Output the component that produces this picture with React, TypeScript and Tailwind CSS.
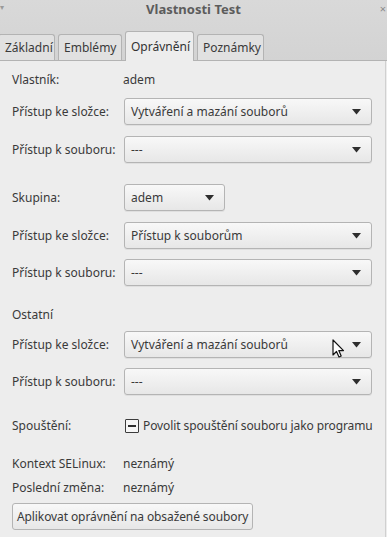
import React from "react";

const font = { fontFamily: '"Noto Sans", "Open Sans", sans-serif' };

function Arrow() {
  return (
    <svg width="9" height="6" viewBox="0 0 9 6" className="shrink-0">
      <path d="M0 0 H9 L4.5 5.5 Z" fill="#2e2e2e" />
    </svg>
  );
}

function Combo({ text, w = "w-[248px]" }: { text: string; w?: string }) {
  return (
    <div
      className={`${w} h-[27px] flex items-center justify-between pl-[6px] pr-[10px] rounded-[3px] border border-[#b4b4b4] bg-gradient-to-b from-[#f8f8f8] to-[#e7e7e7] shadow-[0_1px_0_rgba(0,0,0,0.06)]`}
    >
      <span className="text-[#3a3a3a] whitespace-nowrap">{text}</span>
      <Arrow />
    </div>
  );
}

function Row({ label, children, className = "" }: { label: string; children: React.ReactNode; className?: string }) {
  return (
    <div className={`flex items-center ${className}`}>
      <div className="w-[112px] shrink-0 text-[#3a3a3a] whitespace-nowrap">{label}</div>
      {children}
    </div>
  );
}

function Tab({ label, active = false, className = "" }: { label: string; active?: boolean; className?: string }) {
  return active ? (
    <div className={`h-[30px] px-[5px] flex items-center whitespace-nowrap rounded-t-[3px] border border-b-0 border-[#b3b3b3] bg-[#ededed] text-[#333] -mb-px relative z-10 ${className}`}>
      {label}
    </div>
  ) : (
    <div className={`h-[26px] px-[5px] flex items-center whitespace-nowrap rounded-t-[3px] border border-b-0 border-[#b3b3b3] bg-[#e1e1e1] text-[#3a3a3a] ${className}`}>
      {label}
    </div>
  );
}

export default function App() {
  return (
    <div className="w-[387px] h-[537px] overflow-hidden bg-[#ededed] text-[12px] leading-[18px] relative" style={font}>
      {/* header */}
      <div className="h-[61px] bg-gradient-to-b from-[#d9d9d9] to-[#d3d3d3] border-b border-[#b3b3b3] flex flex-col relative">
        <div className="h-[17px] flex items-center justify-center relative">
          <span className="font-bold text-[13px] text-[#5c5c5c] whitespace-nowrap">Vlastnosti Test</span>
          <span className="absolute left-[0px] top-[3px] text-[8px] text-[#9a9a9a] leading-none">▾</span>
          <span className="absolute right-[1px] top-[3px] text-[11px] text-[#8a8a8a] leading-none">×</span>
        </div>
        <div className="mt-auto flex items-end gap-[3px] -ml-[2px]">
          <Tab label="Základní" className="w-[57px] pl-[6px]" />
          <Tab label="Emblémy" className="w-[64px]" />
          <Tab label="Oprávnění" active className="w-[69px]" />
          <Tab label="Poznámky" className="w-[67px]" />
        </div>
      </div>

      {/* content */}
      <div className="pl-[12px] pt-[10px] flex flex-col">
        <Row label="Vlastník:" className="h-[18px]">
          <span className="text-[#3a3a3a] -ml-px">adem</span>
        </Row>
        <Row label="Přístup ke složce:" className="mt-[9px]">
          <Combo text="Vytváření a mazání souborů" />
        </Row>
        <Row label="Přístup k souboru:" className="mt-[11px]">
          <Combo text="---" />
        </Row>

        <Row label="Skupina:" className="mt-[21px]">
          <Combo text="adem" w="w-[101px]" />
        </Row>
        <Row label="Přístup ke složce:" className="mt-[11px]">
          <Combo text="Přístup k souborům" />
        </Row>
        <Row label="Přístup k souboru:" className="mt-[10px]">
          <Combo text="---" />
        </Row>

        <div className="mt-[20px] h-[18px] flex items-center text-[#3a3a3a]">Ostatní</div>
        <Row label="Přístup ke složce:" className="mt-[7px]">
          <Combo text="Vytváření a mazání souborů" />
        </Row>
        <Row label="Přístup k souboru:" className="mt-[10px]">
          <Combo text="---" />
        </Row>

        <Row label="Spouštění:" className="mt-[22px] h-[18px]">
          <div className="flex items-center gap-[4px] ml-px">
            <div className="w-[14px] h-[14px] border border-[#3c3c3c] bg-[#f6f6f6] rounded-[1px] flex items-center justify-center">
              <div className="w-[8px] h-[2px] bg-[#2e2e2e]" />
            </div>
            <span className="text-[#3a3a3a] whitespace-nowrap tracking-[-0.1px]">Povolit spouštění souboru jako programu</span>
          </div>
        </Row>

        <Row label="Kontext SELinux:" className="mt-[20px] h-[18px]">
          <span className="text-[#3a3a3a] -ml-px">neznámý</span>
        </Row>
        <Row label="Poslední změna:" className="mt-[6px] h-[18px]">
          <span className="text-[#3a3a3a] -ml-px">neznámý</span>
        </Row>

        <div className="mt-[6px] flex">
          <div className="flex h-[27px] items-center px-[4px] rounded-[3px] border border-[#b4b4b4] bg-gradient-to-b from-[#f8f8f8] to-[#e7e7e7] text-[#3a3a3a] whitespace-nowrap tracking-[-0.1px]">
            Aplikovat oprávnění na obsažené soubory
          </div>
        </div>
      </div>

      {/* right edge line of panel */}
      <div className="absolute right-[1px] top-[61px] bottom-0 w-px bg-[#d0d0d0]" />

      {/* mouse cursor */}
      <svg className="absolute left-[332px] top-[339px]" width="14" height="20" viewBox="0 0 14 20">
        <path d="M1 1 L1 16 L4.5 12.5 L7 18 L9.2 17 L6.8 11.6 L11.5 11.6 Z" fill="#ffffff" stroke="#111" strokeWidth="1.2" strokeLinejoin="round" />
      </svg>
    </div>
  );
}
